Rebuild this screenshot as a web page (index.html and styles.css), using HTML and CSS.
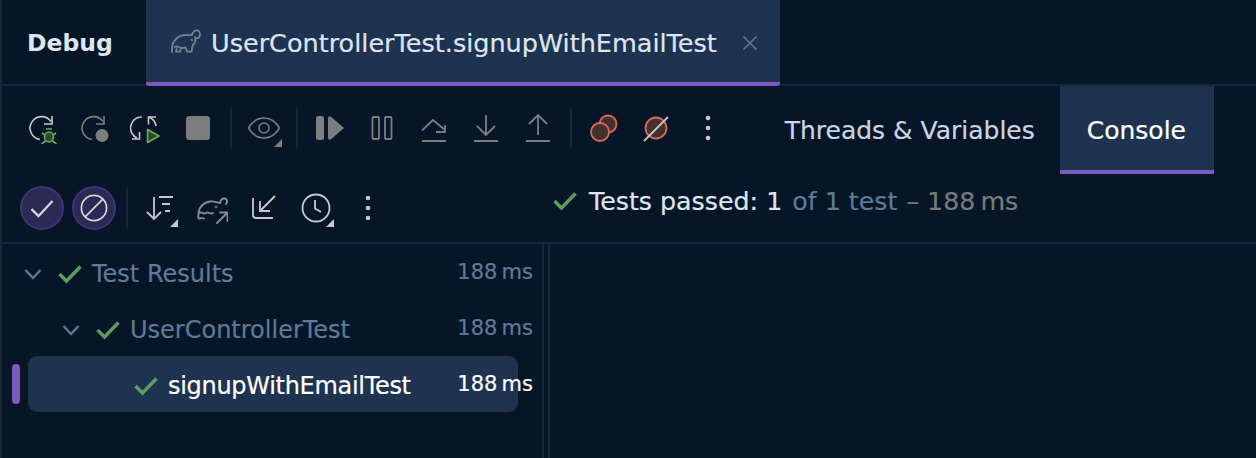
FILE: index.html
```html
<!DOCTYPE html>
<html lang="en">
<head>
  <meta charset="UTF-8">
  <title>Debug</title>
  <link rel="stylesheet" href="styles.css">
</head>
<body>

  <div class="tool-window">
    <!-- Title bar with run tab -->
    <div class="title-bar">
      <div class="title">Debug</div>
      <div class="run-tab">
        <svg class="icon-elephant" viewBox="0 0 32 32" fill="none" stroke="#76828f" stroke-width="1.800" stroke-linecap="round" stroke-linejoin="round">
          <path d="M2 25c0-6 0-8 2-10.500C7 10 11 8 15 8c3 0 5 .5 7 0 .5-3 3-5 6-4.500 2.500 1 2.500 4.500 1 7-1 1-3 1-4-.5"/>
          <path d="M25.500 11c.5 3-.5 5-2.500 7-1 1.500-1 4-1.300 6.700h-4.500l-1.700-4.500c-1.500 1-3 1-4.500.3L10 24.700H6l.5-2.700"/>
          <path d="M5 20c2-1 3-.5 4 0"/>
          <circle cx="22" cy="13" r="0.400"/>
        </svg>
        <span class="run-name">UserControllerTest.signupWithEmailTest</span>
        <svg class="icon-close" viewBox="0 0 16 16" fill="none" stroke="#6d7680" stroke-width="1.600">
          <path d="M1.500 1.500l13 13M14.500 1.500l-13 13"/>
        </svg>
      </div>
    </div>

    <!-- Debugger toolbar + content tabs -->
    <div class="toolbar-row">
      <div class="toolbar">
        <button class="btn">
          <svg viewBox="0 0 32 32" fill="none" stroke="#c8c8c8" stroke-width="1.600">
            <path d="M25 9.500a11.500 11.500 0 1 0-11 18"/><path d="M26 4v8h-8"/>
            <ellipse cx="23" cy="25" rx="4.500" ry="5" fill="#2f4a2c" stroke="#6cab5f"/>
            <path d="M15.500 32l4-3M30.500 32l-4-3M16 21l3 2M30 21l-3 2M20 17h6" stroke="#6cab5f"/>
          </svg>
        </button>
        <button class="btn">
          <svg viewBox="0 0 32 32" fill="none" stroke="#7d7d7d" stroke-width="1.600">
            <path d="M25 9.500a11.500 11.500 0 1 0-11 18"/><path d="M26 4v8h-8"/>
            <circle cx="24" cy="23.500" r="6.500" fill="#7d7d7d" stroke="none"/>
          </svg>
        </button>
        <button class="btn">
          <svg viewBox="0 0 32 32" fill="none" stroke="#c8c8c8" stroke-width="1.600">
            <path d="M12 5A11 11 0 0 0 7 26"/><path d="M2 27h7.500v-7"/>
            <path d="M19 5a12 12 0 0 1 7 9"/><path d="M26 5h-7.500v7.500"/>
            <path d="M17.500 17.500v13l11.500-6.500z" stroke="#6cab5f" stroke-linejoin="round" fill="#2f4a2c"/>
          </svg>
        </button>
        <button class="btn">
          <svg viewBox="0 0 32 32"><rect x="4" y="4" width="24" height="24" rx="3.500" fill="#7d7d7d"/></svg>
        </button>
        <span class="sep"></span>
        <button class="btn has-menu dim">
          <svg viewBox="0 0 32 32" fill="none" stroke="#7d7d7d" stroke-width="1.600">
            <path d="M0.500 16C5 8.500 10 6 16 6s11 2.500 15.500 10C27 23.500 22 26 16 26S5 23.500 0.500 16z"/>
            <circle cx="16" cy="16" r="5"/>
          </svg>
        </button>
        <span class="sep"></span>
        <button class="btn">
          <svg viewBox="0 0 32 32" fill="#7d7d7d">
            <rect x="2" y="4" width="8" height="24" rx="2.500"/>
            <path d="M14 6.500c0-2 1.500-3 3-1.700L30 16 17 27.200c-1.500 1.300-3 .3-3-1.700z"/>
          </svg>
        </button>
        <button class="btn">
          <svg viewBox="0 0 32 32" fill="none" stroke="#7d7d7d" stroke-width="1.800">
            <rect x="6.500" y="5" width="6.500" height="22" rx="1"/><rect x="19" y="5" width="6.500" height="22" rx="1"/>
          </svg>
        </button>
        <button class="btn">
          <svg viewBox="0 0 32 32" fill="none" stroke="#7d7d7d" stroke-width="1.800">
            <path d="M4 29h24" stroke-width="2"/><path d="M4 18.500L15 8l12 10"/><path d="M27 13v7h-9"/>
          </svg>
        </button>
        <button class="btn">
          <svg viewBox="0 0 32 32" fill="none" stroke="#7d7d7d" stroke-width="1.800">
            <path d="M4 29h24" stroke-width="2"/><path d="M16 3v20M7 14l9 9 9-9"/>
          </svg>
        </button>
        <button class="btn">
          <svg viewBox="0 0 32 32" fill="none" stroke="#7d7d7d" stroke-width="1.800">
            <path d="M4 29h24" stroke-width="2"/><path d="M16 23V3M7 12l9-9 9 9"/>
          </svg>
        </button>
        <span class="sep"></span>
        <button class="btn">
          <svg viewBox="0 0 32 32" stroke="#d9685f" stroke-width="1.800" fill="#45302e">
            <circle cx="20" cy="12" r="8.500"/><circle cx="12" cy="20" r="9"/>
          </svg>
        </button>
        <button class="btn">
          <svg viewBox="0 0 32 32" fill="#45302e">
            <circle cx="16" cy="16" r="10.500" stroke="#d9685f" stroke-width="1.800"/>
            <path d="M4 29L28 5" stroke="#c8c8c8" stroke-width="1.800"/>
          </svg>
        </button>
        <button class="btn">
          <svg viewBox="0 0 32 32" fill="#c8c8c8"><circle cx="16" cy="6" r="2.300"/><circle cx="16" cy="16" r="2.300"/><circle cx="16" cy="26" r="2.300"/></svg>
        </button>
      </div>
      <div class="view-tabs">
        <div class="view-tab">Threads &amp; Variables</div>
        <div class="view-tab active">Console</div>
      </div>
    </div>

    <!-- Test runner toolbar + status -->
    <div class="test-row">
      <div class="test-tools">
        <span class="toggle">
          <svg viewBox="0 0 24 24" fill="none" stroke="#d4d6dc" stroke-width="2"><path d="M3 13l6 6L21 6"/></svg>
        </span>
        <span class="toggle">
          <svg viewBox="0 0 30 30" fill="none" stroke="#d4d6dc" stroke-width="1.800"><circle cx="15" cy="15" r="13.500"/><path d="M5.500 24.500l19-19"/></svg>
        </span>
        <span class="sep"></span>
        <button class="btn has-menu">
          <svg viewBox="0 0 32 32" fill="none" stroke="#c8c8c8" stroke-width="1.800">
            <path d="M10 5v22M3 20l7 7 7-7"/><path d="M15 5h14M18 12h8M21 19h5"/>
          </svg>
        </button>
        <button class="btn">
          <svg viewBox="0 0 32 32" fill="none" stroke="#8a8a8a" stroke-width="1.900" stroke-linejoin="round" stroke-linecap="round">
            <path d="M2.500 26c-.5-4 0-7 1.500-10 2.500-4 6-6 10-6.500 4-.5 7 1 10 1.500.5-3 2-5 5-4.500 2.500 1 2.500 3.500 1 5.500"/>
            <path d="M3 21c3-2 4 2 7 0s4 2 7 0"/>
            <path d="M3 26.500c2 0 3-1 5 0M21 31l10-10M24 20.500h7.500V29"/>
            <circle cx="20" cy="15" r="0.400"/>
          </svg>
        </button>
        <button class="btn">
          <svg viewBox="0 0 32 32" fill="none" stroke="#c8c8c8" stroke-width="1.800">
            <path d="M5 6v17a3 3 0 0 0 3 3h17"/><path d="M27 4L12 19M12 9v10h10"/>
          </svg>
        </button>
        <button class="btn has-menu">
          <svg viewBox="0 0 32 32" fill="none" stroke="#c8c8c8" stroke-width="1.800">
            <circle cx="16" cy="16" r="13.500"/><path d="M15 8v8.500l6 3.500"/>
          </svg>
        </button>
        <button class="btn">
          <svg viewBox="0 0 32 32" fill="#c8c8c8"><circle cx="16" cy="6" r="2.300"/><circle cx="16" cy="16" r="2.300"/><circle cx="16" cy="26" r="2.300"/></svg>
        </button>
      </div>
      <div class="status">
        <svg class="check status-check" viewBox="0 0 24 20" fill="none" stroke="#5f9a5f" stroke-width="3.500"><path d="M1.500 10l7 7L22.500 2.500"/></svg>
        <span class="status-main">Tests passed: 1</span>
        <span class="status-sub">of 1 test</span>
        <span class="status-time">– 188&#8201;ms</span>
      </div>
    </div>

    <!-- Test tree + empty console -->
    <div class="panes">
      <div class="tree">
        <div class="row">
          <svg class="chevron" viewBox="0 0 18 12" fill="none" stroke="#5f7a96" stroke-width="2.400"><path d="M1.500 2l7.500 8 7.500-8"/></svg>
          <svg class="check" viewBox="0 0 24 20" fill="none" stroke="#5f9a5f" stroke-width="3.500"><path d="M1.500 10l7 7L22.500 2.500"/></svg>
          <span class="row-name">Test Results</span>
          <span class="row-time">188&#8201;ms</span>
        </div>
        <div class="row level-2">
          <svg class="chevron" viewBox="0 0 18 12" fill="none" stroke="#5f7a96" stroke-width="2.400"><path d="M1.500 2l7.500 8 7.500-8"/></svg>
          <svg class="check" viewBox="0 0 24 20" fill="none" stroke="#5f9a5f" stroke-width="3.500"><path d="M1.500 10l7 7L22.500 2.500"/></svg>
          <span class="row-name">UserControllerTest</span>
          <span class="row-time">188&#8201;ms</span>
        </div>
        <div class="row level-3 selected">
          <svg class="check" viewBox="0 0 24 20" fill="none" stroke="#5f9a5f" stroke-width="3.500"><path d="M1.500 10l7 7L22.500 2.500"/></svg>
          <span class="row-name">signupWithEmailTest</span>
          <span class="row-time">188&#8201;ms</span>
        </div>
      </div>
      <div class="console"></div>
    </div>
  </div>

</body>
</html>
```

FILE: styles.css
```css
/* General Styles */
* {
  box-sizing: border-box;
}

body {
  margin: 0;
  width: 1256px;
  height: 458px;
  overflow: hidden;
  background-color: #061626;
  font-family: "DejaVu Sans", sans-serif;
  font-size: 25.5px;
  -webkit-text-stroke: 0.2px;
  color: #dfe5f0;
}

.tool-window {
  height: 100%;
  display: flex;
  flex-direction: column;
  border-left: 2px solid #16273b;
}

svg {
  display: block;
}

/* Title bar */
.title-bar {
  height: 86px;
  flex: none;
  display: flex;
  border-bottom: 2px solid #16273b;
}

.title {
  width: 144px;
  padding: 29px 0 0 25px;
  font-size: 23.5px;
  font-weight: bold;
  -webkit-text-stroke: 0;
}

.run-tab {
  width: 634px;
  height: 86px;
  display: flex;
  align-items: center;
  padding: 4px 0 0 24px;
  background-color: #1e3350;
  border-bottom: 4px solid #7c5abf;
  border-radius: 0 0 3px 3px;
}

.icon-elephant {
  width: 32px;
  height: 32px;
  margin-right: 9px;
}

.run-name {
  white-space: nowrap;
}

.icon-close {
  width: 16px;
  height: 16px;
  margin-left: 25px;
}

/* Toolbars */
.toolbar-row {
  height: 88px;
  flex: none;
  display: flex;
  justify-content: space-between;
}

.toolbar {
  display: flex;
  align-items: center;
  padding: 0 0 4px 14px;
}

.btn {
  position: relative;
  width: 52px;
  height: 32px;
  padding: 0 10px;
  border: none;
  background: none;
  flex: none;
}

.btn svg {
  width: 32px;
  height: 32px;
}

/* little triangle on icons with a dropdown */
.has-menu::after {
  content: "";
  position: absolute;
  right: 8px;
  bottom: -3px;
  border-style: solid;
  border-width: 0 0 8px 8px;
  border-color: transparent transparent #c8c8c8 transparent;
}

.has-menu.dim::after {
  border-bottom-color: #7d7d7d;
}

.sep {
  width: 2px;
  height: 40px;
  margin: 0 6px;
  background-color: #16273b;
  flex: none;
}

.view-tabs {
  display: flex;
  padding-right: 42px;
  font-size: 25px;
}

.view-tab {
  height: 88px;
  padding: 5px 25px 0;
  display: flex;
  align-items: center;
  color: #ccd5e3;
  border-bottom: 4px solid transparent;
  white-space: nowrap;
}

.view-tab.active {
  padding: 5px 28px 0 27px;
  color: #fff;
  background-color: #1e3350;
  border-bottom-color: #7c5abf;
}

/* Test row */
.test-row {
  height: 70px;
  flex: none;
  display: flex;
  border-bottom: 2px solid #16273b;
}

.test-tools {
  width: 539px;
  display: flex;
  align-items: center;
  padding: 0 0 0 18px;
}

.toggle {
  width: 44px;
  height: 44px;
  margin-right: 8px;
  border-radius: 50%;
  background-color: #2c2a54;
  border: 2px solid #3e3577;
  display: flex;
  align-items: center;
  justify-content: center;
  flex: none;
}

.toggle svg {
  width: 28px;
  height: 28px;
}

.test-tools .sep {
  margin: 0 6px 0 2px;
}

.status {
  display: flex;
  align-items: center;
  padding: 0 0 14px 12px;
  font-size: 25.3px;
  white-space: nowrap;
}

.check {
  width: 24px;
  height: 20px;
  flex: none;
}

.status-check {
  margin-right: 12px;
}

.status-main {
  margin-right: 10px;
}

.status-sub {
  color: #5f7a96;
  margin-right: 9px;
}

.status-time {
  color: #7a7a7a;
}

/* Test tree */
.panes {
  flex: 1;
  display: flex;
}

.tree {
  width: 542px;
  flex: none;
  padding: 0 0 0 26px;
  border-right: 2px solid #16273b;
  font-size: 24px;
}

.row {
  position: relative;
  width: 490px;
  height: 56px;
  display: flex;
  align-items: center;
  padding-top: 4px;
  color: #5f7a96;
  white-space: nowrap;
}

.chevron {
  width: 18px;
  height: 12px;
  margin: 0 16px 0 -4px;
  flex: none;
}

.row .check {
  margin-right: 10px;
}

.level-2 {
  padding-left: 38px;
}

.level-3 {
  padding-left: 106px;
}

.row-time {
  margin: -4px -15px 0 auto;
  font-size: 21px;
}

.row.selected {
  color: #fff;
  background-color: #1e3350;
  border-radius: 9px;
}

.selected .row-name {
  letter-spacing: -0.3px;
}

/* purple marker left of the selected row */
.row.selected::before {
  content: "";
  position: absolute;
  left: -16px;
  top: 8px;
  width: 8px;
  height: 40px;
  border-radius: 4px;
  background-color: #7c5abf;
}

.console {
  flex: 1;
  margin-left: 4px;
  border-left: 2px solid #16273b;
}
```
